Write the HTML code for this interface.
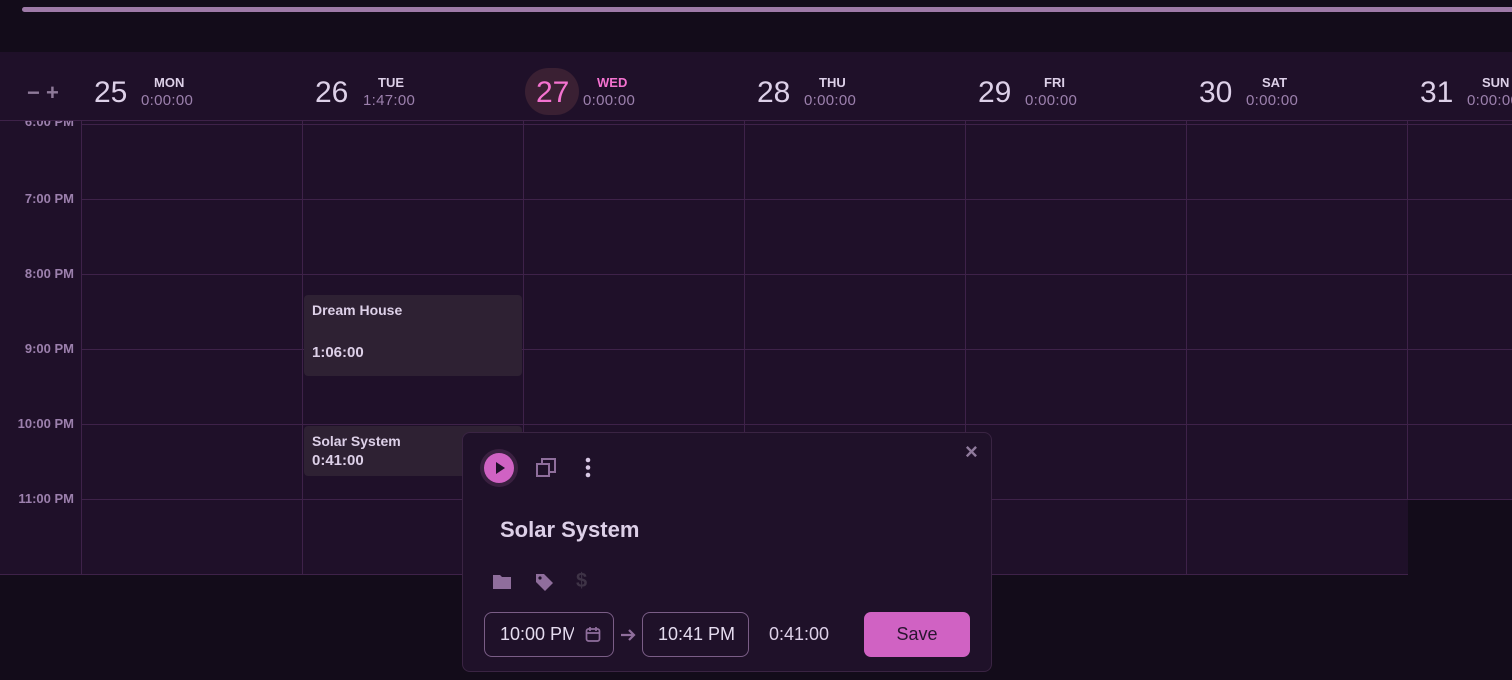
<!DOCTYPE html>
<html><head><style>
*{box-sizing:border-box;margin:0;padding:0}
body{width:1512px;height:680px;background:#130c1a;font-family:"Liberation Sans",sans-serif;position:relative;overflow:hidden}
.abs{position:absolute}
.bar{left:22px;top:7px;width:1500px;height:5px;background:#9e7aa8;border-radius:3px}
.hdr{left:0;top:52px;width:1512px;height:69px;background:#1f1029;border-bottom:1px solid #3e2249}
.grid{left:0;top:121px;width:1512px;height:454px;background:#1f1029}
.hl{height:1px;background:#3e2249}
.vl{width:1px;background:#3e2249}
.tl{color:#9c80ad;font-size:13px;font-weight:bold;width:74px;text-align:right}
.dn{font-size:30px;color:#ddd0e8;top:76px}
.dw{font-size:13px;font-weight:bold;color:#ddd0e8;top:75px}
.dt{font-size:15px;color:#9c80ad;top:92px;letter-spacing:.3px}
.ev{background:#2e2133;border-radius:4px;color:#ddd0e8;font-weight:bold;font-size:14px;padding:7px 8px}
.pop{left:462px;top:432px;width:530px;height:240px;background:#1f1129;border:1px solid #3a2443;border-radius:8px}
.inp{border:1px solid #7a5d86;border-radius:8px;height:45px;color:#e5dcef;font-size:18px;padding:11px 15px}
</style></head><body>
<div class="abs bar"></div>
<div class="abs hdr"></div>
<div class="abs grid"></div>
<div class="abs" style="left:1408px;top:500px;width:104px;height:80px;background:#130c1a"></div>
<div class="abs hl" style="left:81px;top:124px;width:1431px"></div>
<div class="abs hl" style="left:81px;top:199px;width:1431px"></div>
<div class="abs hl" style="left:81px;top:274px;width:1431px"></div>
<div class="abs hl" style="left:81px;top:349px;width:1431px"></div>
<div class="abs hl" style="left:81px;top:424px;width:1431px"></div>
<div class="abs hl" style="left:81px;top:499px;width:1431px"></div>
<div class="abs hl" style="left:0;top:574px;width:1408px"></div>
<div class="abs vl" style="left:81px;top:121px;height:454px"></div>
<div class="abs vl" style="left:302px;top:121px;height:454px"></div>
<div class="abs vl" style="left:523px;top:121px;height:454px"></div>
<div class="abs vl" style="left:744px;top:121px;height:454px"></div>
<div class="abs vl" style="left:965px;top:121px;height:454px"></div>
<div class="abs vl" style="left:1186px;top:121px;height:454px"></div>
<div class="abs vl" style="left:1407px;top:121px;height:379px"></div>
<div class="abs" style="left:0;top:121px;width:81px;height:10px;overflow:hidden"><div class="tl" style="margin-top:-7px">6:00 PM</div></div>
<div class="abs tl" style="left:0;top:191px">7:00 PM</div>
<div class="abs tl" style="left:0;top:266px">8:00 PM</div>
<div class="abs tl" style="left:0;top:341px">9:00 PM</div>
<div class="abs tl" style="left:0;top:416px">10:00 PM</div>
<div class="abs tl" style="left:0;top:491px">11:00 PM</div>
<div class="abs" style="left:27px;top:80px;color:#8e7a99;font-size:22px;font-weight:bold">− +</div>
<div class="abs" style="left:525px;top:68px;width:54px;height:47px;border-radius:24px;background:#3a2033"></div>
<div class="abs dn" style="left:94px">25</div><div class="abs dw" style="left:154px">MON</div><div class="abs dt" style="left:141px">0:00:00</div>
<div class="abs dn" style="left:315px">26</div><div class="abs dw" style="left:378px">TUE</div><div class="abs dt" style="left:363px">1:47:00</div>
<div class="abs dn" style="left:536px;color:#f472d0">27</div><div class="abs dw" style="left:597px;color:#f472d0">WED</div><div class="abs dt" style="left:583px">0:00:00</div>
<div class="abs dn" style="left:757px">28</div><div class="abs dw" style="left:819px">THU</div><div class="abs dt" style="left:804px">0:00:00</div>
<div class="abs dn" style="left:978px">29</div><div class="abs dw" style="left:1044px">FRI</div><div class="abs dt" style="left:1025px">0:00:00</div>
<div class="abs dn" style="left:1199px">30</div><div class="abs dw" style="left:1262px">SAT</div><div class="abs dt" style="left:1246px">0:00:00</div>
<div class="abs dn" style="left:1420px">31</div><div class="abs dw" style="left:1482px">SUN</div><div class="abs dt" style="left:1467px">0:00:00</div>
<div class="abs ev" style="left:304px;top:295px;width:218px;height:81px">Dream House<div style="margin-top:26px;font-size:15px">1:06:00</div></div>
<div class="abs ev" style="left:304px;top:426px;width:218px;height:50px;padding-top:7px">Solar System<div style="margin-top:3px;font-size:15px">0:41:00</div></div>
<div class="abs pop">
 <div class="abs" style="left:17px;top:16px;width:38px;height:38px;border-radius:50%;background:#3a2040"></div>
 <div class="abs" style="left:21px;top:20px;width:30px;height:30px;border-radius:50%;background:#d062c3"></div>
 <svg class="abs" style="left:21px;top:20px" width="30" height="30"><path d="M12 9 L21 15 L12 21Z" fill="#1f1029"/></svg>
 <svg class="abs" style="left:72px;top:24px" width="22" height="22" fill="none" stroke="#8f6e9c" stroke-width="2"><rect x="2" y="7" width="12" height="12"/><path d="M7 7V2h13v13h-6"/></svg>
 <svg class="abs" style="left:120px;top:24px" width="10" height="22"><circle cx="5" cy="3" r="2.3" fill="#d8c8e4"/><circle cx="5" cy="10.5" r="2.3" fill="#d8c8e4"/><circle cx="5" cy="18" r="2.3" fill="#d8c8e4"/></svg>
 <div class="abs" style="left:502px;top:6px;color:#8f7a9c;font-size:22px;font-weight:bold">×</div>
 <div class="abs" style="left:37px;top:84px;color:#ddd0e8;font-size:22px;font-weight:bold">Solar System</div>
 <svg class="abs" style="left:29px;top:140px" width="20" height="18"><path d="M1 2h7l2 2h9v12H1z" fill="#8f6e9c"/></svg>
 <svg class="abs" style="left:71px;top:139px" width="20" height="20"><path d="M2 2h8l9 9-8 8-9-9z" fill="#8f6e9c"/><circle cx="6" cy="6" r="1.6" fill="#1f1129"/></svg>
 <div class="abs" style="left:113px;top:137px;color:#3e3346;font-size:20px;font-weight:bold">$</div>
 <div class="abs inp" style="left:21px;top:179px;width:130px"><div style="width:74px;overflow:hidden;white-space:nowrap">10:00 PM</div></div>
 <svg class="abs" style="left:122px;top:193px" width="16" height="17" fill="none" stroke="#8f6e9c" stroke-width="1.7"><rect x="1.5" y="3" width="13" height="12" rx="2"/><path d="M1.5 7h13M5 1v4M11 1v4"/></svg>
 <svg class="abs" style="left:157px;top:195px" width="18" height="14"><path d="M1 7h12M9 2l5 5-5 5" stroke="#8f6e9c" stroke-width="2.2" fill="none"/></svg>
 <div class="abs inp" style="left:179px;top:179px;width:107px"><div style="width:78px;overflow:hidden;white-space:nowrap">10:41 PM</div></div>
 <div class="abs" style="left:306px;top:191px;color:#ddd0e8;font-size:18px">0:41:00</div>
 <div class="abs" style="left:401px;top:179px;width:106px;height:45px;border-radius:7px;background:#d062c3;color:#2a1530;font-size:18px;text-align:center;line-height:45px">Save</div>
</div>
</body></html>
